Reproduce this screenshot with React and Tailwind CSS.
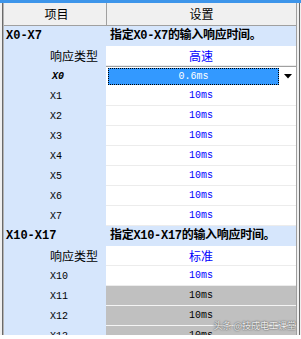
import React from 'react';

const mono = "font-['Liberation_Mono','Noto_Sans_CJK_SC',monospace]";
const cjk = "font-['Noto_Sans_CJK_SC','Liberation_Sans',sans-serif]";

const rows = [
  { type: 'section', label: 'X0-X7', text: '指定X0-X7的输入响应时间。' },
  { type: 'mode', label: '响应类型', value: '高速' },
  { type: 'selected', label: 'X0', value: '0.6ms' },
  { label: 'X1', value: '10ms' },
  { label: 'X2', value: '10ms' },
  { label: 'X3', value: '10ms' },
  { label: 'X4', value: '10ms' },
  { label: 'X5', value: '10ms' },
  { label: 'X6', value: '10ms' },
  { label: 'X7', value: '10ms' },
  { type: 'section', label: 'X10-X17', text: '指定X10-X17的输入响应时间。' },
  { type: 'mode', label: '响应类型', value: '标准' },
  { label: 'X10', value: '10ms' },
  { label: 'X11', value: '10ms', disabled: true },
  { label: 'X12', value: '10ms', disabled: true },
  { label: 'X13', value: '10ms', disabled: true },
];

const Row = ({ row }) => {
  if (row.type === 'section') {
    return (
      <div className="flex h-[20px] shrink-0 bg-[#d6e6fc] text-black">
        <div className={`w-[102px] pl-[2px] flex items-center text-[12px] font-bold ${mono}`}>{row.label}</div>
        <div className={`flex-1 pl-[4px] flex items-center text-[12px] font-bold whitespace-nowrap ${mono} tracking-[-0.3px]`}>
          {row.text}
        </div>
      </div>
    );
  }

  const isMode = row.type === 'mode';
  return (
    <div className="flex h-[20px] shrink-0">
      <div
        className={`w-[102px] bg-[#d6e6fc] pl-[46px] flex items-center text-black ${
          isMode ? `text-[12px] ${cjk}` : `text-[10px] ${mono}`
        } ${row.type === 'selected' ? 'font-bold italic pl-[48px]' : ''}`}
      >
        {row.label}
      </div>
      {row.type === 'selected' ? (
        <div className="flex-1 flex items-stretch bg-white border-t border-[#a0a0a0]">
          <div className={`flex-1 my-[1px] ml-[2px] bg-[#3399ff] border border-dotted border-black flex items-center justify-center text-white text-[10px] ${mono}`}>
            {row.value}
          </div>
          <div className="w-[17px] flex items-center justify-center">
            <svg width="8" height="5" viewBox="0 0 8 5">
              <path d="M0 0 H8 L4 4.5 Z" fill="#000" />
            </svg>
          </div>
        </div>
      ) : (
        <div
          className={`flex-1 border-b border-[#ececec] flex items-center justify-center ${
            row.disabled ? 'bg-[#c0c0c0] text-black border-[#f4f4f4]' : 'bg-white text-[#0000ff]'
          } ${isMode ? `text-[12px] ${cjk}` : `text-[10px] ${mono}`}`}
        >
          {row.value}
        </div>
      )}
    </div>
  );
};

export default function App() {
  return (
    <div className="relative w-[301px] h-[339px] bg-white overflow-hidden">
      <div className="h-[3px] bg-[#3d95ea]" />
      <div className="flex h-[332px]">
        <div className="w-[2px] bg-[#f0f0f0]" />
        <div className="w-[1px] bg-[#6a6a6a]" />
        <div className="w-[1px] bg-[#b4b4b4]" />
        <div className="w-[292px] flex flex-col overflow-hidden">
          {/* Header */}
          <div className={`flex h-[23px] shrink-0 bg-[#f0f0f0] border-b border-[#a0a0a0] text-[12px] text-black ${cjk}`}>
            <div className="w-[102px] flex items-center justify-center pl-[3px]">项目</div>
            <div className="flex-1 border-l border-[#a0a0a0] flex items-center justify-center">设置</div>
          </div>
          {rows.map((row, i) => (
            <Row key={i} row={row} />
          ))}
        </div>
        <div className="w-[1px] bg-[#a0a0a0]" />
        <div className="w-[2px] bg-[#f0f0f0]" />
        <div className="w-[1px] bg-[#6a6a6a]" />
        <div className="w-[1px] bg-[#f0f0f0]" />
      </div>

      {/* watermark */}
      <div
        className={`absolute right-[5px] top-[320px] text-[9px] leading-[12px] text-white/90 whitespace-nowrap ${cjk}`}
        style={{ textShadow: '0 0 2px #555, 0 0 1px #555' }}
      >
        头条 @技成电工课堂
      </div>
    </div>
  );
}
